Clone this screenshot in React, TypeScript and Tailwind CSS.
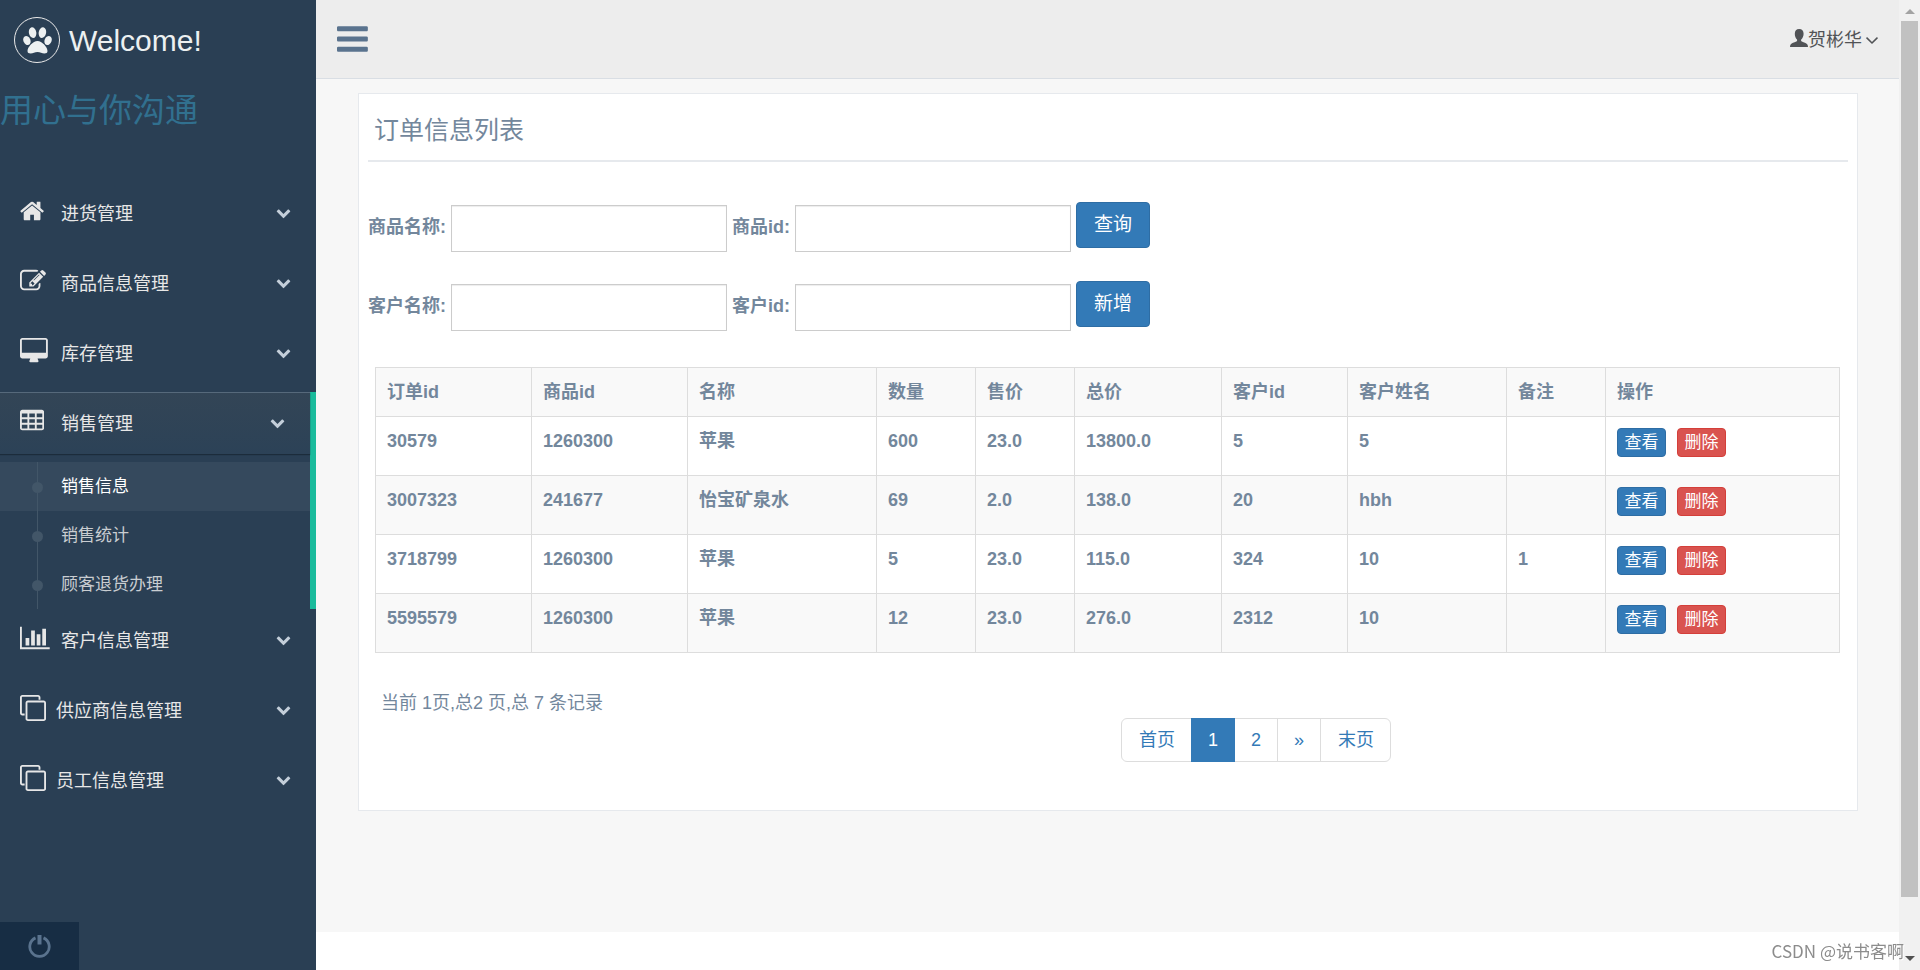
import type { ReactNode } from 'react';

type IconProps = { className?: string };

function Glyph({ box, className, children }: { box: string; className?: string; children: ReactNode }) {
    return (
        <svg viewBox={box} className={className} fill="currentColor" aria-hidden="true">
            {children}
        </svg>
    );
}

function PawIcon({ className }: IconProps) {
    return (
        <Glyph box="0 0 29 27" className={className}>
            <ellipse cx="9.600" cy="5.600" rx="3.700" ry="5.400" transform="rotate(-10 9.600 5.600)" />
            <ellipse cx="19.400" cy="5.600" rx="3.700" ry="5.400" transform="rotate(10 19.400 5.600)" />
            <ellipse cx="3.900" cy="13.500" rx="3.500" ry="4.700" transform="rotate(-22 3.900 13.500)" />
            <ellipse cx="25.100" cy="13.500" rx="3.500" ry="4.700" transform="rotate(22 25.100 13.500)" />
            <path d="M14.500 14C10 14 4.500 20.300 4.500 23.900c0 1.800 1.300 2.500 3.100 2.500 2.500 0 4.100-1.500 6.900-1.500s4.400 1.500 6.900 1.500c1.800 0 3.100-.7 3.100-2.500C24.500 20.300 19 14 14.500 14z" />
        </Glyph>
    );
}

function BarsIcon({ className }: IconProps) {
    return (
        <Glyph box="128 0 1536 1792" className={className}>
            <path d="M1664 1344v128q0 26-19 45t-45 19h-1408q-26 0-45-19t-19-45v-128q0-26 19-45t45-19h1408q26 0 45 19t19 45zm0-512v128q0 26-19 45t-45 19h-1408q-26 0-45-19t-19-45v-128q0-26 19-45t45-19h1408q26 0 45 19t19 45zm0-512v128q0 26-19 45t-45 19h-1408q-26 0-45-19t-19-45v-128q0-26 19-45t45-19h1408q26 0 45 19t19 45z" />
        </Glyph>
    );
}

function HomeIcon({ className }: IconProps) {
    return (
        <Glyph box="64 0 1664 1792" className={className}>
            <path d="M1472 992v480q0 26-19 45t-45 19h-384v-384h-256v384h-384q-26 0-45-19t-19-45v-480q0-1 .5-3t.5-3l575-474 575 474q1 2 1 6zm223-69l-62 74q-8 9-21 11h-3q-13 0-21-7l-692-577-692 577q-12 8-24 7-13-2-21-11l-62-74q-8-10-7-23.500t11-21.500l719-599q32-26 76-26t76 26l244 204v-195q0-14 9-23t23-9h192q14 0 23 9t9 23v408l219 182q10 8 11 21.500t-7 23.500z" />
        </Glyph>
    );
}

function EditIcon({ className }: IconProps) {
    return (
        <Glyph box="0 0 1792 1792" className={className}>
            <path d="M888 1184l116-116-152-152-116 116v56h96v96h56zm440-720q-16-16-33 1l-350 350q-17 17-1 33t33-1l350-350q17-17 1-33zm80 594v190q0 119-84.500 203.500t-203.500 84.500h-832q-119 0-203.500-84.500t-84.500-203.500v-832q0-119 84.500-203.500t203.500-84.500h832q63 0 117 25 15 7 18 23 3 17-9 29l-49 49q-14 14-32 8-23-6-45-6h-832q-66 0-113 47t-47 113v832q0 66 47 113t113 47h832q66 0 113-47t47-113v-126q0-13 9-22l64-64q15-15 35-7t20 29zm-96-738l288 288-672 672h-288v-288zm444 132l-92 92-288-288 92-92q28-28 68-28t68 28l152 152q28 28 28 68t-28 68z" />
        </Glyph>
    );
}

function DesktopIcon({ className }: IconProps) {
    return (
        <Glyph box="0 0 1920 1792" className={className}>
            <path d="M1792 992v-832q0-13-9.500-22.500t-22.500-9.500h-1600q-13 0-22.500 9.500t-9.500 22.500v832q0 13 9.500 22.500t22.500 9.500h1600q13 0 22.500-9.500t9.500-22.500zm128-832v1088q0 66-47 113t-113 47h-544q0 37 16 77.500t32 71 16 43.500q0 26-19 45t-45 19h-512q-26 0-45-19t-19-45q0-14 16-44t32-70 16-78h-544q-66 0-113-47t-47-113v-1088q0-66 47-113t113-47h1600q66 0 113 47t47 113z" />
        </Glyph>
    );
}

function TableIcon({ className }: IconProps) {
    return (
        <Glyph box="0 0 1664 1792" className={className}>
            <path
                fillRule="evenodd"
                d="M160 128h1344q66 0 113 47t47 113v1088q0 66-47 113t-113 47h-1344q-66 0-113-47t-47-113v-1088q0-66 47-113t113-47zM128 384v256h384v-256zM640 384v256h384v-256zM1152 384v256h384v-256zM128 768v256h384v-256zM640 768v256h384v-256zM1152 768v256h384v-256zM128 1152v256h384v-256zM640 1152v256h384v-256zM1152 1152v256h384v-256z"
            />
        </Glyph>
    );
}

function ChartIcon({ className }: IconProps) {
    return (
        <Glyph box="0 0 2048 1792" className={className}>
            <path d="M640 896v512h-256v-512h256zm384-512v1024h-256v-1024h256zm1024 1152v128h-2048v-1536h128v1408h1920zm-640-896v768h-256v-768h256zm384-384v1152h-256v-1152h256z" />
        </Glyph>
    );
}

function CloneIcon({ className }: IconProps) {
    return (
        <Glyph box="0 0 1792 1792" className={className}>
            <path d="M1664 1632v-1088q0-13-9.500-22.500t-22.500-9.500h-1088q-13 0-22.500 9.500t-9.500 22.500v1088q0 13 9.500 22.500t22.500 9.500h1088q13 0 22.500-9.500t9.500-22.500zm128-1088v1088q0 66-47 113t-113 47h-1088q-66 0-113-47t-47-113v-1088q0-66 47-113t113-47h1088q66 0 113 47t47 113zm-384-384v160h-128v-160q0-13-9.500-22.500t-22.500-9.500h-1088q-13 0-22.500 9.500t-9.500 22.500v1088q0 13 9.500 22.500t22.500 9.500h160v128h-160q-66 0-113-47t-47-113v-1088q0-66 47-113t113-47h1088q66 0 113 47t47 113z" />
        </Glyph>
    );
}

function ChevronIcon({ className }: IconProps) {
    return (
        <Glyph box="0 0 1792 1792" className={className}>
            <path d="M1683 808l-742 741q-19 19-45 19t-45-19l-742-741q-19-19-19-45.500t19-45.500l166-165q19-19 45-19t45 19l531 531 531-531q19-19 45-19t45 19l166 165q19 19 19 45.500t-19 45.500z" />
        </Glyph>
    );
}

function AngleIcon({ className }: IconProps) {
    return (
        <Glyph box="384 384 1024 1024" className={className}>
            <path d="M1395 736q0 13-10 23l-466 466q-10 10-23 10t-23-10l-466-466q-10-10-10-23t10-23l50-50q10-10 23-10t23 10l393 393 393-393q10-10 23-10t23 10l50 50q10 10 10 23z" />
        </Glyph>
    );
}

function UserIcon({ className }: IconProps) {
    return (
        <Glyph box="0 0 18 18" className={className}>
            <path d="M9.200 0C6.300 0 4.800 2 4.800 4.800c0 2.400.8 4.600 2.200 5.700.3.900.1 1.700-.7 2.100C4 13.600 1.700 14.200.8 15.200.2 15.900 0 16.900 0 18h18c0-1.100-.2-2.100-.8-2.800-.9-1-3.200-1.600-5.300-2.600-.8-.4-1-1.200-.7-2.100 1.400-1.100 2.400-3.300 2.400-5.700C13.600 2 12 0 9.200 0z" />
        </Glyph>
    );
}

function PowerIcon({ className }: IconProps) {
    return (
        <svg viewBox="0 0 23 23" className={className} fill="none" stroke="currentColor" aria-hidden="true">
            <path d="M7.500 2.900a9.700 9.700 0 1 0 8 0" strokeWidth="2.800" />
            <path d="M11.500 0v9.500" strokeWidth="4" />
        </svg>
    );
}

type Item = { text: string; icon: ReactNode; tight?: boolean; children?: string[] };

const menu: Item[] = [
    { text: '进货管理', icon: <HomeIcon className="h-[26px]" /> },
    { text: '商品信息管理', icon: <EditIcon className="h-[26px]" /> },
    { text: '库存管理', icon: <DesktopIcon className="h-[26px]" /> },
    { text: '销售管理', icon: <TableIcon className="h-[26px]" />, children: ['销售信息', '销售统计', '顾客退货办理'] },
    { text: '客户信息管理', icon: <ChartIcon className="h-[26px]" /> },
    { text: '供应商信息管理', icon: <CloneIcon className="h-[26px]" />, tight: true },
    { text: '员工信息管理', icon: <CloneIcon className="h-[26px]" />, tight: true },
];

function MenuItem({ item }: { item: Item }) {
    const open = !!item.children;
    return (
        <li className={open ? 'border-r-[6px] border-[#1ABB9C]' : ''}>
            <a
                href="#"
                className={
                    'mb-2 flex h-[62px] items-start pt-4 pl-5 pr-[25px] text-[18px] leading-8 text-[#E7E7E7] ' +
                    (open
                        ? 'bg-linear-to-b from-[#334556] to-[#2C4257] shadow-[inset_0_1px_0_#56697b,0_1px_1px_#1c2c3b]'
                        : '')
                }
            >
                <span className={item.tight ? 'w-9 shrink-0' : 'w-[41px] shrink-0'}>{item.icon}</span>
                <span className="flex-1">{item.text}</span>
                <ChevronIcon className="mt-[7px] h-[15px] w-[15px] text-[#C4CFDA]" />
            </a>
            {item.children && (
                <ul>
                    {item.children.map((child, i) => (
                        <li
                            key={child}
                            className={'relative flex h-[49px] ' + (i === 0 ? 'bg-white/5 text-white' : 'text-[#C9CDD1]')}
                        >
                            <span className="absolute inset-y-0 left-[37px] w-px bg-[#425668]" />
                            <span className="absolute top-5 left-8 h-[11px] w-[11px] rounded-full bg-[#425668]" />
                            <a href="#" className="flex-1 pl-[61px] text-[17px] leading-[49px]">
                                {child}
                            </a>
                        </li>
                    ))}
                </ul>
            )}
        </li>
    );
}

function Sidebar() {
    return (
        <aside className="flex w-[316px] shrink-0 flex-col bg-[#2A3F54]">
            <a href="#" className="flex h-20 items-center gap-[9px] pl-[14px] text-[30px] text-[#ECF0F1]">
                <span className="flex h-[46px] w-[46px] items-center justify-center rounded-full border border-[#EAEAEA]">
                    <PawIcon className="w-[29px]" />
                </span>
                <span>Welcome!</span>
            </a>
            <h2 className="mb-10 text-[33px] leading-[62px] text-[#31708F]">用心与你沟通</h2>
            <nav className="flex-1">
                <ul>
                    {menu.map((item) => (
                        <MenuItem key={item.text} item={item} />
                    ))}
                </ul>
            </nav>
            <button
                type="button"
                aria-label="退出"
                className="flex h-12 w-[79px] items-center justify-center bg-[#172D44] text-[#5A738E]"
            >
                <PowerIcon className="w-[23px]" />
            </button>
        </aside>
    );
}

function Field({ id, label }: { id: string; label: string }) {
    return (
        <>
            <label htmlFor={id} className="pt-2.5 leading-[30px] font-bold">
                {label}
            </label>
            <input
                id={id}
                type="text"
                className="mt-[3px] h-[47px] w-[276px] border border-[#CCC] bg-white px-4 shadow-[inset_0_1px_1px_rgba(0,0,0,0.075)] outline-none"
            />
        </>
    );
}

const searchRows = [
    { name: '商品名称:', id: '商品id:', action: '查询' },
    { name: '客户名称:', id: '客户id:', action: '新增' },
];

const columns = [
    { title: '订单id', width: 'w-[156px]' },
    { title: '商品id', width: 'w-[156px]' },
    { title: '名称', width: 'w-[189px]' },
    { title: '数量', width: 'w-[99px]' },
    { title: '售价', width: 'w-[99px]' },
    { title: '总价', width: 'w-[147px]' },
    { title: '客户id', width: 'w-[126px]' },
    { title: '客户姓名', width: 'w-[159px]' },
    { title: '备注', width: 'w-[99px]' },
    { title: '操作', width: '' },
];

const orders = [
    ['30579', '1260300', '苹果', '600', '23.0', '13800.0', '5', '5', ''],
    ['3007323', '241677', '怡宝矿泉水', '69', '2.0', '138.0', '20', 'hbh', ''],
    ['3718799', '1260300', '苹果', '5', '23.0', '115.0', '324', '10', '1'],
    ['5595579', '1260300', '苹果', '12', '23.0', '276.0', '2312', '10', ''],
];

function OrderTable() {
    return (
        <table className="w-full table-fixed border-collapse border border-[#DDD] text-left font-bold">
            <thead>
                <tr className="h-[49px] bg-[#F9F9F9]">
                    {columns.map((c) => (
                        <th key={c.title} className={'border border-[#DDD] px-[11px] ' + c.width}>
                            {c.title}
                        </th>
                    ))}
                </tr>
            </thead>
            <tbody>
                {orders.map((row) => (
                    <tr key={row[0]} className="h-[59px] align-top even:bg-[#F9F9F9]">
                        {row.map((cell, i) => (
                            <td key={i} className="border border-[#DDD] px-[11px] pt-[11px] leading-[26px]">
                                {cell}
                            </td>
                        ))}
                        <td className="border border-[#DDD] px-[11px] pt-[11px]">
                            <div className="flex gap-[11px] text-[17px] leading-[26px] font-normal text-white">
                                <button type="button" className="h-[29px] w-[49px] rounded border border-[#2E6DA4] bg-[#337AB7]">
                                    查看
                                </button>
                                <button type="button" className="h-[29px] w-[49px] rounded border border-[#D43F3A] bg-[#D9534F]">
                                    删除
                                </button>
                            </div>
                        </td>
                    </tr>
                ))}
            </tbody>
        </table>
    );
}

function Pagination() {
    return (
        <nav className="ml-auto flex w-1/2 px-[13px]">
            <ul className="flex h-11 rounded-md border border-[#DDD] leading-[42px] text-[#337AB7]">
                <li className="pr-4 pl-[17px]">
                    <a href="#">首页</a>
                </li>
                <li className="-my-px bg-[#337AB7] px-[17px] leading-[44px] text-white">
                    <a href="#">1</a>
                </li>
                <li className="border-r border-[#DDD] px-4">
                    <a href="#">2</a>
                </li>
                <li className="border-r border-[#DDD] px-4">
                    <a href="#">»</a>
                </li>
                <li className="pr-4 pl-[17px]">
                    <a href="#">末页</a>
                </li>
            </ul>
        </nav>
    );
}

export default function App() {
    return (
        <div className="flex h-screen overflow-hidden bg-white font-['Liberation_Sans','Noto_Sans_CJK_SC',sans-serif] text-[18px] text-[#73879C]">
            <Sidebar />
            <div className="flex min-w-0 flex-1 flex-col">
                <header className="flex h-[79px] shrink-0 items-center justify-between border-b border-[#D9DEE4] bg-[#EDEDED] pr-[21px] pl-[21px]">
                    <button type="button" aria-label="菜单" className="text-[#5A738E]">
                        <BarsIcon className="h-9" />
                    </button>
                    <a href="#" className="flex items-center pt-0.5 text-[#515356]">
                        <UserIcon className="mb-1 h-[18px]" />
                        贺彬华
                        <AngleIcon className="ml-1 h-3" />
                    </a>
                </header>
                <main className="flex-1 bg-[#F7F7F7] pt-[14px] pr-[41px] pl-[42px]">
                    <section className="border border-[#E6E9ED] bg-white px-[9px] pb-12">
                        <h2 className="border-b-2 border-[#E6E9ED] pt-4 pb-[10px] pl-1.5 text-[25px] leading-10">
                            订单信息列表
                        </h2>
                        <form className="mt-10 mb-9 flex flex-col gap-[29px]">
                            {searchRows.map((row, i) => (
                                <div key={row.action} className="flex items-start gap-[5px]">
                                    <Field id={`name-${i}`} label={row.name} />
                                    <Field id={`id-${i}`} label={row.id} />
                                    <button
                                        type="button"
                                        className="h-[46px] w-[74px] rounded border border-[#2E6DA4] bg-[#337AB7] text-[19px] text-white"
                                    >
                                        {row.action}
                                    </button>
                                </div>
                            ))}
                        </form>
                        <div className="pr-2 pl-[7px]">
                            <OrderTable />
                        </div>
                        <p className="mt-[35px] pl-[13px] leading-[30px]">当前 1页,总2 页,总 7 条记录</p>
                        <Pagination />
                    </section>
                </main>
                <footer className="h-[38px] shrink-0 bg-white" />
            </div>
            <div className="flex w-[21px] shrink-0 flex-col items-center bg-[#F1F1F1]">
                <span className="mt-[9px] mb-[7px] border-x-[5px] border-b-[5px] border-x-transparent border-b-[#A3A3A3]" />
                <span className="w-[17px] flex-1 bg-[#C1C1C1]" />
                <span className="mt-[59px] mb-[9px] border-x-[5px] border-t-[5px] border-x-transparent border-t-[#505050]" />
            </div>
            <div className="fixed right-4 bottom-[7px] font-['Noto_Sans_CJK_SC',sans-serif] text-[17px] leading-6 text-[#8C8C8C] [text-shadow:1px_1px_0_#fff]">
                CSDN @说书客啊
            </div>
        </div>
    );
}
